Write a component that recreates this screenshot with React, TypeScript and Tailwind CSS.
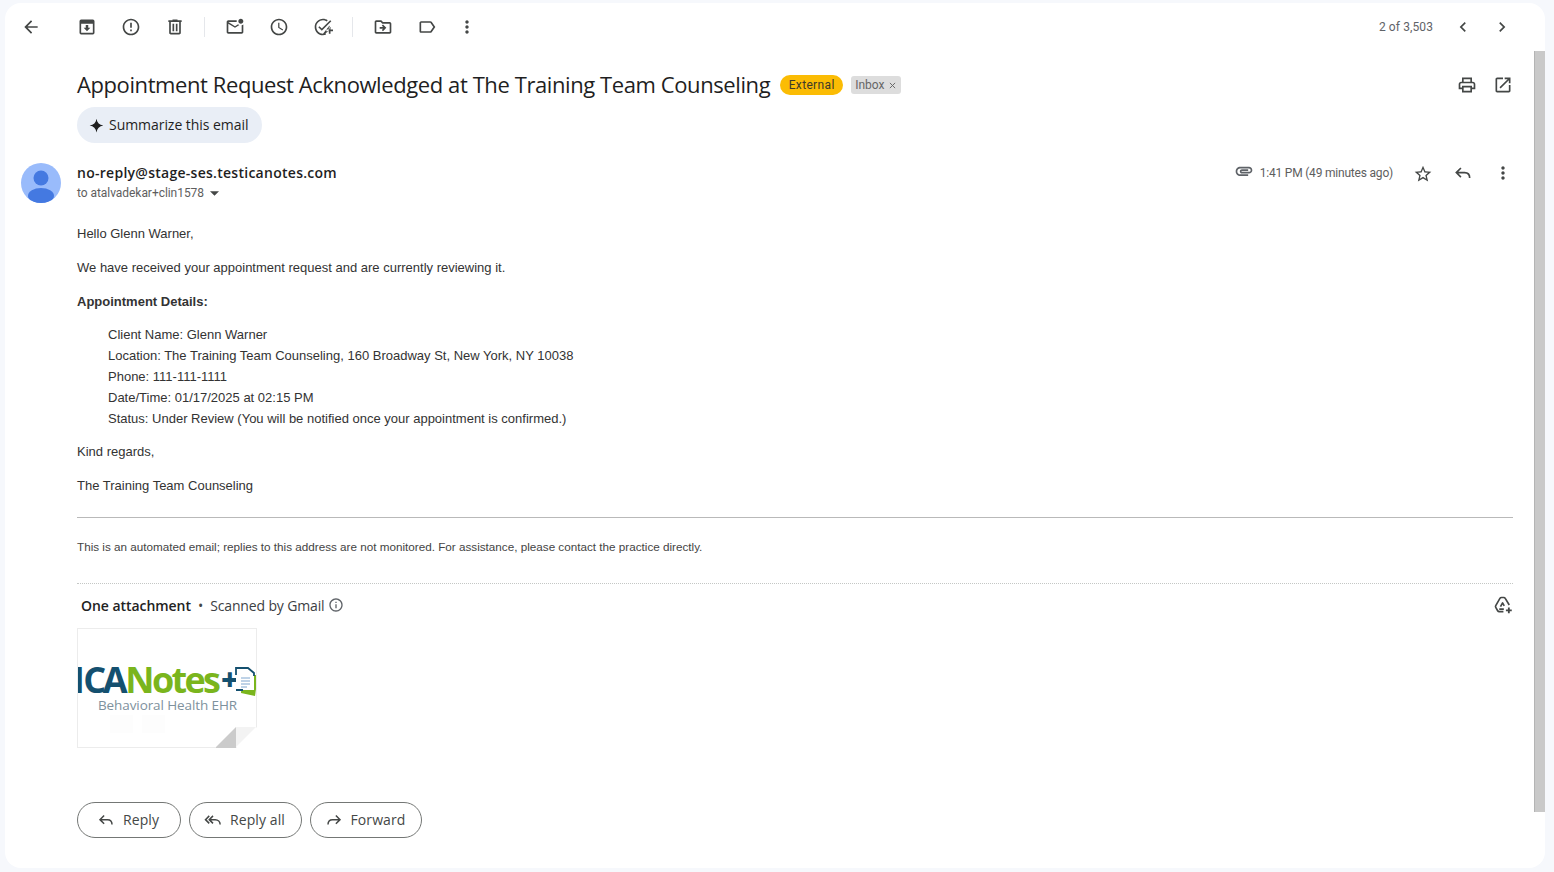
import React from 'react';

const Ico = ({ d, size = 20, className = 'text-[#444746]' }: { d: string; size?: number; className?: string }) => (
  <svg width={size} height={size} viewBox="0 0 24 24" fill="currentColor" className={className}>
    <path d={d} />
  </svg>
);

const Line = ({ d, size = 20, className = 'text-[#444746]' }: { d: string; size?: number; className?: string }) => (
  <svg width={size} height={size} viewBox="0 0 24 24" fill="none" stroke="currentColor" strokeWidth="2" className={className}>
    <path d={d} />
  </svg>
);

const icons = {
  back: 'M20 11H7.83l5.59-5.59L12 4l-8 8 8 8 1.41-1.41L7.83 13H20v-2z',
  report: 'M11 15h2v2h-2zm0-8h2v6h-2zm.99-5C6.47 2 2 6.48 2 12s4.47 10 9.99 10C17.52 22 22 17.52 22 12S17.52 2 11.99 2zM12 20c-4.42 0-8-3.58-8-8s3.58-8 8-8 8 3.58 8 8-3.58 8-8 8z',
  trash: 'M15 4V3H9v1H4v2h1v13c0 1.1.9 2 2 2h10c1.1 0 2-.9 2-2V6h1V4h-5zm2 15H7V6h10v13zM9 8h2v9H9zm4 0h2v9h-2z',
  unread: 'M22 8.98V18c0 1.1-.9 2-2 2H4c-1.1 0-2-.9-2-2V6c0-1.1.9-2 2-2h10.1c-.06.32-.1.66-.1 1 0 .34.04.68.1 1H4l8 5 3.67-2.29c.47.43 1.02.76 1.63.98L12 13 4 8v10h16V9.9c.74-.15 1.42-.48 2-.92zM16 5c0 1.66 1.34 3 3 3s3-1.34 3-3-1.34-3-3-3-3 1.34-3 3z',
  clock: 'M11.99 2C6.47 2 2 6.48 2 12s4.47 10 9.99 10C17.52 22 22 17.52 22 12S17.52 2 11.99 2zM12 20c-4.42 0-8-3.58-8-8s3.58-8 8-8 8 3.58 8 8-3.58 8-8 8zm.5-13H11v6l5.25 3.15.75-1.23-4.5-2.67z',
  task: 'M22 5.18L10.59 16.6l-4.24-4.24 1.41-1.41 2.83 2.83 10-10L22 5.18zm-2.21 5.04c.13.57.21 1.17.21 1.78 0 4.42-3.58 8-8 8s-8-3.58-8-8 3.58-8 8-8c1.58 0 3.04.46 4.28 1.25l1.44-1.44C16.1 2.67 14.13 2 12 2 6.48 2 2 6.48 2 12s4.48 10 10 10c1.2 0 2.35-.21 3.41-.6v-2.15c-1.03.48-2.18.75-3.41.75zM19 15h-3v2h3v3h2v-3h3v-2h-3v-3h-2v3z',
  move: 'M20 6h-8l-2-2H4c-1.1 0-1.99.9-1.99 2L2 18c0 1.1.9 2 2 2h16c1.1 0 2-.9 2-2V8c0-1.1-.9-2-2-2zm0 12H4V6h5.17l2 2H20v10zM12.16 12H8v2h4.16l-1.59 1.59L11.99 17 16 13l-4.01-4-1.42 1.41L12.16 12z',
  label: 'M17.63 5.84C17.27 5.33 16.67 5 16 5L5 5.01C3.9 5.01 3 5.9 3 7v10c0 1.1.9 1.99 2 1.99L16 19c.67 0 1.27-.33 1.63-.84L22 12l-4.37-6.16zM16 17H5V7h11l3.55 5L16 17z',
  more: 'M12 8c1.1 0 2-.9 2-2s-.9-2-2-2-2 .9-2 2 .9 2 2 2zm0 2c-1.1 0-2 .9-2 2s.9 2 2 2 2-.9 2-2-.9-2-2-2zm0 6c-1.1 0-2 .9-2 2s.9 2 2 2 2-.9 2-2-.9-2-2-2z',
  left: 'M15.41 7.41L14 6l-6 6 6 6 1.41-1.41L10.83 12z',
  right: 'M10 6L8.59 7.41 13.17 12l-4.58 4.59L10 18l6-6z',
  print: 'M19 8h-1V3H6v5H5c-1.66 0-3 1.34-3 3v6h4v4h12v-4h4v-6c0-1.66-1.34-3-3-3zM8 5h8v3H8V5zm8 12v2H8v-4h8v2zm2-2v-2H6v2H4v-4c0-.55.45-1 1-1h14c.55 0 1 .45 1 1v4h-2z',
  open: 'M19 19H5V5h7V3H5c-1.11 0-2 .9-2 2v14c0 1.1.89 2 2 2h14c1.1 0 2-.9 2-2v-7h-2v7zM14 3v2h3.59l-9.83 9.83 1.41 1.41L19 6.41V10h2V3h-7z',
  clip: 'M2 12.5C2 9.46 4.46 7 7.5 7H18c2.21 0 4 1.79 4 4s-1.79 4-4 4H9.5C8.12 15 7 13.88 7 12.5S8.12 10 9.5 10H17v2H9.41c-.55 0-.55 1 0 1H18c1.1 0 2-.9 2-2s-.9-2-2-2H7.5C5.57 9 4 10.57 4 12.5S5.57 16 7.5 16H17v2H7.5C4.46 18 2 15.54 2 12.5z',
  star: 'M22 9.24l-7.19-.62L12 2 9.19 8.63 2 9.24l5.46 4.73L5.82 21 12 17.27 18.18 21l-1.63-7.03L22 9.24zM12 15.4l-3.76 2.27 1-4.28-3.32-2.88 4.38-.38L12 6.1l1.71 4.04 4.38.38-3.32 2.88 1 4.28L12 15.4z',
  info: 'M11 7h2v2h-2zm0 4h2v6h-2zm1-9C6.48 2 2 6.48 2 12s4.48 10 10 10 10-4.48 10-10S17.52 2 12 2zm0 18c-4.41 0-8-3.59-8-8s3.59-8 8-8 8 3.59 8 8-3.59 8-8 8z',
};

const replyPath = 'M9.5 6 4 11.5l5.5 5.5M4 11.5h10c3.5 0 6 2.5 6 6.5';
const replyAllPath = 'M7 6.5 2 11.5l5 5M12 6.5 7 11.5l5 5M7 11.5h8c3.5 0 6.500 2.500 6.500 6.500';
const forwardPath = 'M14.500 6 20 11.500 14.500 17M20 11.500H10c-3.500 0-6 2.500-6 6.500';

const Btn = ({ d, w = 'w-[44px]' }: { d: string; w?: string }) => (
  <div className={`${w} h-[40px] flex items-center justify-center shrink-0`}>
    <Ico d={d} />
  </div>
);

const Sep = () => <div className="w-px h-[20px] bg-[#e5e7eb] mx-[7px] shrink-0" />;

const ActionButton = ({ d, label, w }: { d: string; label: string; w: string }) => (
  <div className={`${w} h-[36px] pr-[2px] rounded-[18px] border border-[#747775] flex items-center justify-center gap-[8px] text-[14px] text-[#444746] font-['Open_Sans',sans-serif] font-normal tracking-[0.1px]`}>
    <Line d={d} size={18} />
    <span className="-mt-[2px]">{label}</span>
  </div>
);

export default function App() {
  return (
    <div className="h-[872px] w-[1554px] bg-[#f6f8fc] overflow-hidden pt-[3px] pb-[4px] pl-[5px] pr-[9px] font-['Roboto',sans-serif]">
      <div className="relative h-full bg-white rounded-2xl flex overflow-hidden">
        <div className="flex-1 min-w-0 flex flex-col">
          {/* toolbar */}
          <div className="h-[48px] flex items-center pl-[4px] pr-[13px] shrink-0">
            <Btn d={icons.back} />
            <div className="w-[12px]" />
            <div className="w-[44px] h-[40px] flex items-center justify-center shrink-0">
              <svg width="20" height="20" viewBox="0 0 24 24" fill="currentColor" className="text-[#444746]">
                <path d="M5 3h14a2 2 0 0 1 2 2v14a2 2 0 0 1-2 2H5a2 2 0 0 1-2-2V5a2 2 0 0 1 2-2zm0 5v11h14V8H5zm5.500 1.500h3V13H16l-4 4-4-4h2.500V9.500z" />
              </svg>
            </div>
            <Btn d={icons.report} />
            <Btn d={icons.trash} />
            <Sep />
            <div className="w-px" />
            <Btn d={icons.unread} />
            <Btn d={icons.clock} />
            <Btn d={icons.task} />
            <Sep />
            <Btn d={icons.move} w="w-[45px]" />
            <Btn d={icons.label} />
            <Btn d={icons.more} w="w-[36px]" />
            <div className="flex-1" />
            <span className="text-[12px] text-[#5f6368] mr-[10px] tracking-[0.1px]">2 of 3,503</span>
            <Btn d={icons.left} w="w-[40px]" />
            <Btn d={icons.right} w="w-[38px]" />
          </div>

          {/* subject */}
          <div className="h-[40px] mt-[14px] pl-[72px] pr-[21px] flex items-center shrink-0">
            <h1 className="-mt-[2px] text-[22px] font-normal text-[#1f1f1f] font-['Open_Sans',sans-serif] tracking-[-0.41px] whitespace-nowrap">
              Appointment Request Acknowledged at The Training Team Counseling
            </h1>
            <span className="ml-[10px] h-[20px] w-[63px] justify-center rounded-[10px] bg-[#fbbc04] text-[12px] tracking-[0.35px] text-[#3c3a2a] flex items-center">External</span>
            <span className="ml-[8px] h-[18px] w-[50px] pl-[4px] rounded-[3px] bg-[#dddddd] text-[12px] text-[#666666] flex items-center gap-[5px]">
              Inbox
              <svg width="7" height="7" viewBox="0 0 8 8" stroke="currentColor" strokeWidth="1.1"><path d="M1 1l6 6M7 1 1 7" /></svg>
            </span>
            <div className="flex-1" />
            <div className="flex gap-[16px]">
              <Ico d={icons.print} />
              <Ico d={icons.open} />
            </div>
          </div>

          {/* summarize */}
          <div className="pl-[72px] mt-[2px] shrink-0">
            <div className="w-[185px] h-[36px] rounded-[18px] bg-[#e9eef6] flex items-center pl-[12px] gap-[5px] text-[14px] text-[#1f1f1f] font-['Open_Sans',sans-serif] tracking-[-0.05px] whitespace-nowrap">
              <svg width="15" height="15" viewBox="0 0 24 24" fill="currentColor"><path d="M12 1c1 6.500 4.500 10 11 11-6.500 1-10 4.500-11 11-1-6.500-4.500-10-11-11 6.500-1 10-4.500 11-11z" /></svg>
              <span className="-mt-[2px]">Summarize this email</span>
            </div>
          </div>

          {/* sender */}
          <div className="mt-[20px] pl-[16px] pr-[21px] flex shrink-0">
            <svg width="40" height="40" viewBox="0 0 40 40" className="shrink-0">
              <defs><clipPath id="av"><circle cx="20" cy="20" r="20" /></clipPath></defs>
              <g clipPath="url(#av)">
                <rect width="40" height="40" fill="#99bbfb" />
                <circle cx="20" cy="15" r="7.500" fill="#4479e1" />
                <ellipse cx="20" cy="33" rx="13" ry="8" fill="#4479e1" />
              </g>
            </svg>
            <div className="ml-[16px] flex flex-col">
              <span className="text-[14px] leading-[20px] font-semibold text-[#1f1f1f] font-['Open_Sans',sans-serif] tracking-[0.27px]">no-reply@stage-ses.testicanotes.com</span>
              <span className="mt-[1px] leading-[18px] text-[12px] text-[#5e5e5e] flex items-center tracking-[-0.05px]">
                to atalvadekar+clin1578
                <svg width="9" height="5" viewBox="0 0 10 5" className="ml-[6px] mt-[1px]" fill="#444746"><path d="M0 0h10L5 5z" /></svg>
              </span>
            </div>
            <div className="flex-1" />
            <div className="flex items-start h-[20px]">
              <Ico d={icons.clip} size={20} className="text-[#5f6368] -mt-[2px]" />
              <span className="ml-[6px] text-[12px] leading-[20px] text-[#5e5e5e] tracking-[-0.2px]">1:41 PM (49 minutes ago)</span>
              <div className="w-[20px]" />
              <Ico d={icons.star} size={20} className="text-[#444746] mt-[1px]" />
              <div className="w-[20px]" />
              <Line d={replyPath} size={20} />
              <div className="w-[20px]" />
              <Ico d={icons.more} size={20} />
            </div>
          </div>

          {/* body */}
          <div className="mt-[20px] pl-[72px] pr-[21px] text-[13px] leading-[21px] text-[#333333] font-['Liberation_Sans',sans-serif] shrink-0">
            <p>Hello Glenn Warner,</p>
            <p className="mt-[13px]">We have received your appointment request and are currently reviewing it.</p>
            <p className="mt-[13px] font-bold">Appointment Details:</p>
            <ul className="mt-[12px] pl-[31px]">
              <li>Client Name: Glenn Warner</li>
              <li>Location: The Training Team Counseling, 160 Broadway St, New York, NY 10038</li>
              <li>Phone: 111-111-1111</li>
              <li>Date/Time: 01/17/2025 at 02:15 PM</li>
              <li>Status: Under Review (You will be notified once your appointment is confirmed.)</li>
            </ul>
            <p className="mt-[12px]">Kind regards,</p>
            <p className="mt-[13px]">The Training Team Counseling</p>
            <div className="mt-[21px] border-t border-[#b9b9b9]" />
            <p className="mt-[19px] text-[11.7px] leading-[20px] text-[#444444]">This is an automated email; replies to this address are not monitored. For assistance, please contact the practice directly.</p>
            <div className="mt-[26px] border-t border-dotted border-[#c4c7c5]" />
          </div>

          {/* attachments */}
          <div className="pl-[76px] pr-[21px] h-[42px] flex items-center text-[14px] text-[#3c4043] font-['Open_Sans',sans-serif] shrink-0">
            <span className="font-semibold text-[#222222] tracking-[-0.05px]">One attachment</span>
            <span className="mx-[7px] text-[#444746]">•</span>
            <span className="tracking-[-0.15px]">Scanned by Gmail</span>
            <Ico d={icons.info} size={16} className="ml-[4px] text-[#5f6368]" />
            <div className="flex-1" />
            <svg width="20" height="20" viewBox="0 0 24 24" fill="none" stroke="#444746" strokeWidth="2" strokeLinejoin="round">
              <path d="M12.500 20H7.500c-.8 0-1.500-.4-1.900-1.100l-2.300-4c-.4-.7-.4-1.500 0-2.200l5-8.600C8.700 3.400 9.400 3 10.200 3h2.600c.8 0 1.500.4 1.900 1.100L19.500 12" />
              <path d="M7.500 17H13M9 14l2.500-4.500 2 3.500" />
              <path d="M19 15v7M15.500 18.500h7" strokeWidth="2.200" />
            </svg>
          </div>

          <div className="pl-[72px] shrink-0">
            <div className="relative w-[180px] h-[120px] mt-[2px] border border-[#ececec] bg-white">
              <div className="relative h-full overflow-hidden">
                <div className="mt-[36px] -ml-[5px] flex items-start font-['Open_Sans',sans-serif] whitespace-nowrap">
                  <span className="text-[36px] leading-[30px] font-bold tracking-[-1.6px] text-[#14506f]">I</span>
                  <span className="text-[36px] leading-[30px] font-bold tracking-[-3.4px] text-[#14506f]">CA</span>
                  <span className="ml-[1px] text-[36px] leading-[30px] font-bold tracking-[-2.7px] text-[#7ab51d]">Notes</span>
                </div>
                <span className="absolute left-[143px] top-[35px] text-[30px] leading-[30px] font-extrabold text-[#14506f] font-['Open_Sans',sans-serif]">+</span>
                <svg width="24" height="30" viewBox="0 0 24 30" className="absolute left-[156px] top-[38px]">
                  <path d="M8 8h16l-3 21-14-3z" fill="#7ab51d" />
                  <path d="M2 1h12l6 5v17H2z" fill="#fff" />
                  <path d="M2 8V1h12l6 5v3M2 23h7" fill="none" stroke="#14506f" strokeWidth="1.800" />
                  <path d="M7 11h9M7 14h9M7 17h9M7 20h6" stroke="#7ea6cf" strokeWidth="1" />
                </svg>
                <p className="absolute left-[20px] top-[66px] text-[13.500px] leading-[20px] text-[#7e919d] font-['Open_Sans',sans-serif] whitespace-nowrap tracking-[-0.1px]">Behavioral Health EHR</p>
                <div className="absolute left-[32px] top-[86px] w-[23px] h-[18px] bg-[#fdfdfd]" />
                <div className="absolute left-[64px] top-[86px] w-[23px] h-[18px] bg-[#fdfdfd]" />
              </div>
              {/* folded corner */}
              <svg width="41" height="21" viewBox="0 0 41 21" className="absolute -right-px -bottom-px">
                <path d="M41 0v21H20z" fill="#ffffff" />
                <path d="M20 0h20L20 20z" fill="#f3f3f3" />
                <path d="M0 20 20 0v21H0z" fill="#cbcbcb" />
              </svg>
            </div>
          </div>

          {/* reply actions */}
          <div className="mt-[54px] pl-[72px] flex gap-[8px] shrink-0">
            <ActionButton d={replyPath} label="Reply" w="w-[104px]" />
            <ActionButton d={replyAllPath} label="Reply all" w="w-[113px]" />
            <ActionButton d={forwardPath} label="Forward" w="w-[112px]" />
          </div>
        </div>

        {/* scrollbar */}
        <div className="w-[11px] shrink-0 pt-[48px]">
          <div className="h-[761px] bg-[#c9c9c9] border-l border-[#b4b4b4]" />
        </div>
      </div>
    </div>
  );
}
